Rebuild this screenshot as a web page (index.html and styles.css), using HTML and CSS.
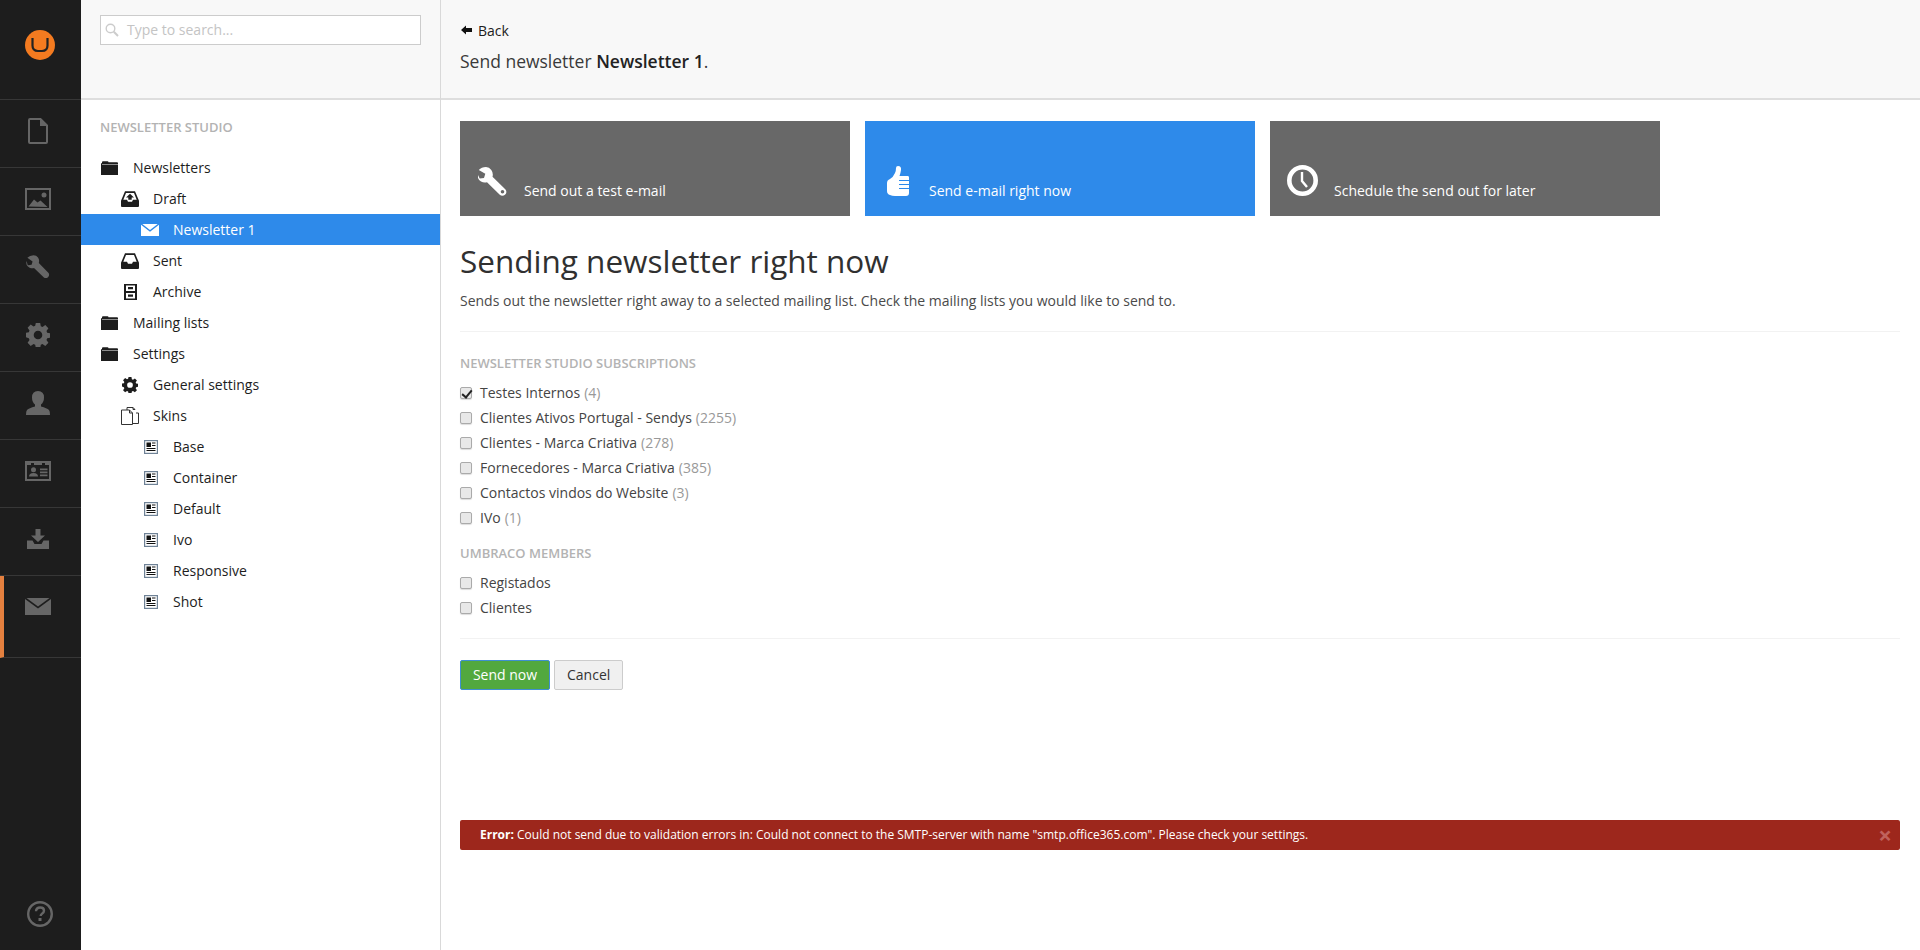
FILE: index.html
```html
<!DOCTYPE html>
<html lang="en">
<head>
<meta charset="utf-8">
<title>Send newsletter</title>
<link rel="stylesheet" href="styles.css">
</head>
<body>
<svg class="defs" width="0" height="0" aria-hidden="true">
  <symbol id="i-folder" viewBox="0 0 17 14"><path d="M0 14V2.200h1V1.300Q1 .3 2 .3h4.500q1 0 1 1h8.600q.9 0 .9 1V3H1v.6h16V14z"/></symbol>
  <symbol id="i-draft" viewBox="0 0 18 16"><path fill-rule="evenodd" d="M4 .3h10l4 9.500V15a1 1 0 0 1-1 1H1a1 1 0 0 1-1-1V9.800zM5 2 2.300 8.800H6l1 2h4l1-2h3.700L13 2zM9 2.800 13 6.600h-2.300v2.200H7.300V6.600H5z"/></symbol>
  <symbol id="i-inbox" viewBox="0 0 18 16"><path fill-rule="evenodd" d="M4 .3h10l4 9.500V15a1 1 0 0 1-1 1H1a1 1 0 0 1-1-1V9.800zM5 2 2.300 8.800H6l1 2h4l1-2h3.700L13 2z"/></symbol>
  <symbol id="i-archive" viewBox="0 0 13 16"><path fill-rule="evenodd" d="M0 0h13v16H0zM2 1.500V7h9V1.500zM2 9v5.500h9V9zM4 3h5v2.200H4zM4 10.500h5v2.200H4z"/></symbol>
  <symbol id="i-gear" viewBox="0 0 24 24"><path fill-rule="evenodd" d="M9.800 0h4.400l.6 3.300 1.700.7 2.800-1.900 3.100 3.100-1.900 2.800.7 1.700 3.300.6v4.400l-3.300.6-.7 1.700 1.900 2.800-3.100 3.100-2.800-1.900-1.700.7-.6 3.300H9.800l-.6-3.300-1.700-.7-2.800 1.900-3.100-3.100 1.900-2.800-.7-1.700L-.5 14.200V9.800l3.300-.6.7-1.700-1.900-2.800 3.100-3.100 2.800 1.900 1.700-.7zM12 7.700a4.300 4.300 0 1 0 0 8.600 4.300 4.300 0 0 0 0-8.600z"/></symbol>
  <symbol id="i-files" viewBox="0 0 18 18"><path fill="none" stroke="currentColor" stroke-width="1" d="M.5 3h8l3 3v11.500H.5zM8.500 3v3h3M6 3V.5h6l2 2M12 .5V2.500h2M15 6h2.500v10.500H12"/></symbol>
  <symbol id="i-news" viewBox="0 0 14 14"><path fill-rule="evenodd" fill="#6f8296" d="M0 0h14v14H0z"/><path fill="#fff" d="M1.200 1.200h11.600v11.600H1.200z"/><path fill="#111" d="M2.500 2.500H7v4.500H2.500zM8 2.500h3.500v1H8zM8 5h3.500v1H8zM2.500 8h9v1h-9zM2.500 10h9v1h-9z"/></symbol>
</svg>
<div class="app">
  <nav class="rail">
    <div class="rail-logo">
      <svg width="30" height="30" viewBox="0 0 30 30"><circle cx="15" cy="15" r="15" fill="#f47b20"/><path d="M7.500 8.500V16q0 5.500 5.500 5.500h4q5.500 0 5.500-5.500V8.500" fill="none" stroke="#222" stroke-width="2.200" transform="translate(0 -.5)"/></svg>
    </div>
    <a class="rail-item"><svg width="20" height="26" viewBox="0 0 20 26"><path d="M1 2q0-1 1-1h10.500L19 7.500V24q0 1-1 1H2q-1 0-1-1z" fill="none" stroke="#666" stroke-width="2"/><path d="M12 0 20 8h-8z" fill="#666"/></svg></a>
    <a class="rail-item"><svg width="26" height="22" viewBox="0 0 26 22"><path d="M1 1h24v20H1z" fill="none" stroke="#666" stroke-width="2"/><path d="M3.500 18.500 9 11.500l3.500 3 3-2 7 6.500z" fill="#666"/><circle cx="19" cy="7" r="2.500" fill="#666"/></svg></a>
    <a class="rail-item"><svg width="24" height="24" viewBox="0 0 24 24"><path d="M7 0Q3 0 .6 2.700L6 6.500 5 10l-4 .5L-.2 6Q-1.500 11 3 13q2.500 1 4.500.3l10.300 10q2.200 1.300 4.300-.4 2-2 .6-4.400L12.500 8q1-3-.8-5.700Q10 0 7 0z" fill="#666" transform="translate(.8 .2) scale(.96)"/></svg></a>
    <a class="rail-item"><svg width="24" height="24" viewBox="0 0 24 24"><use href="#i-gear" fill="#666"/></svg></a>
    <a class="rail-item"><svg width="24" height="24" viewBox="0 0 24 24"><path d="M12 0q6 0 6 6.500 0 4.500-3 7v2q6 1.500 8 3.500 1 1 1 5H0q0-4 1-5 2-2 8-3.500v-2q-3-2.500-3-7Q6 0 12 0z" fill="#666"/></svg></a>
    <a class="rail-item"><svg width="26" height="20" viewBox="0 0 26 20"><path fill-rule="evenodd" d="M0 0h26v20H0zM2 4v14h22V4z" fill="#666"/><path d="M6 2h3v2H6zM17 2h3v2h-3z" fill="#1d1d1d"/><circle cx="8.500" cy="8.700" r="2.500" fill="#666"/><path d="M4 15.500q0-3.500 4.500-3.500t4.500 3.500zM15 7.500h7.500v1.700H15zM15 10.500h7.500v1.700H15zM15 13.500h7.500v1.700H15z" fill="#666"/></svg></a>
    <a class="rail-item"><svg width="22" height="20" viewBox="0 0 22 20"><path d="M8.500 0h5v6.500H18L11 13 4 6.500h4.500z" fill="#666"/><path d="M0 11.500h5.500l2 3.500h7l2-3.500H22V20H0z" fill="#666"/></svg></a>
    <a class="rail-item rail-active"><svg width="26" height="17" viewBox="0 0 26 17"><path d="M0 1 13 10.500 26 1v16H0z" fill="#666"/><path d="M1.500 0h23L13 8.500z" fill="#666"/></svg></a>
    <div class="rail-help">
      <svg width="26" height="26" viewBox="0 0 26 26"><circle cx="13" cy="13" r="11.800" fill="none" stroke="#666" stroke-width="2.400"/><path d="M9 10.200q.2-3.700 4.200-3.700 3.800 0 3.800 3.200 0 1.800-2 3-1.300.8-1.300 2.300" fill="none" stroke="#666" stroke-width="2.400"/><path d="M11.500 17h3v3h-3z" fill="#666"/></svg>
    </div>
  </nav>

  <aside class="tree-panel">
    <div class="tree-head">
      <label class="search">
        <svg width="14" height="14" viewBox="0 0 14 14"><circle cx="5.500" cy="5.500" r="4.300" fill="none" stroke="#ccc" stroke-width="1.400"/><path d="m8.800 8.800 4.200 4.200" stroke="#ccc" stroke-width="2"/></svg>
        <span class="search-ph">Type to search...</span>
      </label>
    </div>
    <div class="tree-body">
      <div class="tree-title">NEWSLETTER STUDIO</div>
      <ul class="tree">
        <li class="row l0"><span class="ico"><svg class="s-folder"><use href="#i-folder"/></svg></span>Newsletters</li>
        <li class="row l1"><span class="ico"><svg class="s-inbox"><use href="#i-draft"/></svg></span>Draft</li>
        <li class="row l2 selected"><span class="ico"><svg class="s-mail" viewBox="0 0 18 12"><path d="M0 .8 9 7.800 18 .8V12H0z" fill="#fff"/><path d="M1.300 0h15.400L9 6z" fill="#fff"/></svg></span>Newsletter 1</li>
        <li class="row l1"><span class="ico"><svg class="s-inbox"><use href="#i-inbox"/></svg></span>Sent</li>
        <li class="row l1"><span class="ico"><svg class="s-archive"><use href="#i-archive"/></svg></span>Archive</li>
        <li class="row l0"><span class="ico"><svg class="s-folder"><use href="#i-folder"/></svg></span>Mailing lists</li>
        <li class="row l0"><span class="ico"><svg class="s-folder"><use href="#i-folder"/></svg></span>Settings</li>
        <li class="row l1"><span class="ico"><svg class="s-gear"><use href="#i-gear"/></svg></span>General settings</li>
        <li class="row l1"><span class="ico"><svg class="s-files"><use href="#i-files"/></svg></span>Skins</li>
        <li class="row l2"><span class="ico"><svg class="s-news"><use href="#i-news"/></svg></span>Base</li>
        <li class="row l2"><span class="ico"><svg class="s-news"><use href="#i-news"/></svg></span>Container</li>
        <li class="row l2"><span class="ico"><svg class="s-news"><use href="#i-news"/></svg></span>Default</li>
        <li class="row l2"><span class="ico"><svg class="s-news"><use href="#i-news"/></svg></span>Ivo</li>
        <li class="row l2"><span class="ico"><svg class="s-news"><use href="#i-news"/></svg></span>Responsive</li>
        <li class="row l2"><span class="ico"><svg class="s-news"><use href="#i-news"/></svg></span>Shot</li>
      </ul>
    </div>
  </aside>

  <main class="main">
    <header class="main-head">
      <a class="back"><svg width="11" height="10" viewBox="0 0 11 10"><path d="M0 5 5 .5V3h6v4H5v2.500z"/></svg>Back</a>
      <div class="page-title">Send newsletter <strong>Newsletter 1</strong>.</div>
    </header>
    <div class="content">
      <div class="cards">
        <a class="card">
          <svg class="card-ico wrench-ico" width="31" height="29" viewBox="0 0 31 29"><path d="M8 0Q3.500 0 .8 3l6.500 3.700L6 11l-4.300.6L-.2 7.500Q-1 12 3 14.500q3 1.800 6 .7L21.500 27.500q2.800 2.300 5.500.2 2.500-2.400.5-5.200L14.500 9.800Q15.500 6 13.300 3 11.300 0 8 0zM24.500 23a1.800 1.800 0 1 1 0 3.600 1.800 1.800 0 0 1 0-3.600z" fill="#fff" fill-rule="evenodd"/></svg>
          <span>Send out a test e-mail</span>
        </a>
        <a class="card card-blue">
          <svg class="card-ico thumb-ico" width="22" height="30" viewBox="0 0 22 30"><path d="M11 0q3.500 0 3 4-.5 3.500-1.500 6H21q1 0 1 1.500V14H12v1h10v3H12v1h10v3H12v1h10v4q0 3-3 3H8q-3 0-5-1-3-1-3-4V17q0-3 3-4 3-1.500 5-6 1-2 1-5 0-2 2-2z" fill="#fff"/></svg>
          <span>Send e-mail right now</span>
        </a>
        <a class="card">
          <svg class="card-ico clock-ico" width="31" height="31" viewBox="0 0 31 31"><circle cx="15.500" cy="15.500" r="13.200" fill="none" stroke="#fff" stroke-width="4.600"/><path d="M15 7v9l5 6" fill="none" stroke="#fff" stroke-width="2.400"/></svg>
          <span>Schedule the send out for later</span>
        </a>
      </div>
      <h2 class="heading">Sending newsletter right now</h2>
      <p class="lead">Sends out the newsletter right away to a selected mailing list. Check the mailing lists you would like to send to.</p>
      <hr class="rule">
      <h5 class="group">NEWSLETTER STUDIO SUBSCRIPTIONS</h5>
      <label class="check"><input type="checkbox" checked>Testes Internos <em>(4)</em></label>
      <label class="check"><input type="checkbox">Clientes Ativos Portugal - Sendys <em>(2255)</em></label>
      <label class="check"><input type="checkbox">Clientes - Marca Criativa <em>(278)</em></label>
      <label class="check"><input type="checkbox">Fornecedores - Marca Criativa <em>(385)</em></label>
      <label class="check"><input type="checkbox">Contactos vindos do Website <em>(3)</em></label>
      <label class="check"><input type="checkbox">IVo <em>(1)</em></label>
      <h5 class="group group-2">UMBRACO MEMBERS</h5>
      <label class="check"><input type="checkbox">Registados</label>
      <label class="check"><input type="checkbox">Clientes</label>
      <hr class="rule rule-2">
      <div class="actions">
        <button class="btn btn-send" type="button">Send now</button>
        <button class="btn" type="button">Cancel</button>
      </div>
      <div class="alert"><span><strong>Error:</strong> Could not send due to validation errors in: Could not connect to the SMTP-server with name "smtp.office365.com". Please check your settings.</span><b class="alert-x">×</b></div>
    </div>
  </main>
</div>
</body>
</html>
```
FILE: styles.css
```css
* { box-sizing: border-box; }
html, body { margin: 0; height: 100%; background: #fff; }
body { font: 14px/20px "Open Sans", "Noto Sans", sans-serif; color: #343434; overflow: hidden; }
.defs { position: absolute; }
a { color: inherit; text-decoration: none; }

.app { display: flex; height: 950px; }

.rail { width: 81px; flex: none; background: #1d1d1d; display: flex; flex-direction: column; }
.rail-logo { height: 100px; border-bottom: 1px solid #373737; padding: 30px 0 0 25px; }
.rail-logo svg { display: block; }
.rail-item { height: 68px; flex: none; border-bottom: 1px solid #373737; display: flex; align-items: center; justify-content: center; padding: 0 5px 5px 0; }
.rail-active { height: 82px; padding: 0 9px 21px 0; border-left: 4px solid #e4803f; }
.rail-help { margin-top: auto; padding: 0 0 23px 27px; }
.rail-help svg { display: block; }

.tree-panel { width: 360px; flex: none; border-right: 1px solid #d9d9d9; display: flex; flex-direction: column; }
.tree-head { height: 100px; background: #f8f8f8; border-bottom: 2px solid #dedede; padding: 15px 19px 0; }
.search { display: flex; align-items: center; gap: 8px; height: 30px; border: 1px solid #ccc; background: #fff; padding-left: 4px; width: 321px; }
.search-ph { color: #c4c4c4; font-size: 14px; }
.tree-body { padding-top: 17px; }
.tree-title { padding-left: 19px; font-size: 13px; font-weight: 600; color: #b3b3b3; line-height: 20px; margin-bottom: 15px; }
.tree { list-style: none; margin: 0; padding: 0; }
.row { display: flex; align-items: center; height: 31px; color: #1d1d1d; }
.l0 { padding-left: 20px; }
.l1 { padding-left: 40px; }
.l2 { padding-left: 60px; }
.ico { width: 32px; display: flex; align-items: center; justify-content: flex-start; flex: none; }
.selected { background: #2e8aea; color: #fff; }
.s-folder { width: 17px; height: 14px; fill: #1d1d1d; margin-top: 1px; }
.s-inbox { width: 18px; height: 16px; fill: #1d1d1d; }
.s-mail { width: 18px; height: 12px; }
.s-archive { width: 13px; height: 16px; fill: #1d1d1d; margin-left: 3px; }
.s-gear { width: 16px; height: 16px; fill: #1d1d1d; margin-left: 1px; }
.s-files { width: 18px; height: 18px; color: #333; }
.s-news { width: 14px; height: 14px; margin-left: 3px; }

.main { flex: 1; min-width: 0; display: flex; flex-direction: column; }
.main-head { height: 100px; background: #f8f8f8; border-bottom: 2px solid #dedede; padding: 21px 19px 0; }
.back { display: flex; align-items: center; gap: 6px; color: #1d1d1d; height: 20px; padding-left: 1px; }
.back svg { margin-top: -2px; fill: #111; }
.page-title { font-size: 17.500px; line-height: 24px; margin-top: 8px; color: #3a3a3a; }
.page-title strong { font-weight: 600; color: #222; }

.content { padding: 21px 20px 0 19px; }
.cards { display: flex; gap: 15px; }
.card { width: 390px; height: 95px; background: #686868; color: #fff; display: flex; align-items: flex-start; position: relative; padding: 60px 0 0 64px; line-height: 20px; }
.card-blue { background: #2e8aea; }
.card-ico { position: absolute; }
.wrench-ico { left: 18px; top: 46px; }
.thumb-ico { left: 22px; top: 45px; }
.clock-ico { left: 17px; top: 44px; }

.heading { font-size: 31.500px; font-weight: 400; line-height: 36px; margin: 27px 0 0; color: #303030; }
.lead { margin: 12px 0 0; color: #4a4a4a; }
.rule { border: 0; border-top: 1px solid #f2f2f2; margin: 20px 0 0; }
.group { font-size: 13px; font-weight: 600; color: #b3b3b3; line-height: 20px; margin: 21px 0 7px; }
.group-2 { margin: 13px 0 7px; }
.check { display: flex; align-items: center; height: 25px; color: #444; }
.check em { font-style: normal; color: #999; margin-left: 4px; }
.check input { appearance: none; -webkit-appearance: none; width: 12px; height: 12px; margin: 1px 8px 0 0; background: #e8e8e8; border: 1px solid #aaa; border-radius: 2px; box-shadow: 0 1px 1px #ddd; position: relative; flex: none; }
.check input:checked::after { content: ""; position: absolute; left: 3px; top: 0; width: 4px; height: 8px; border: solid #222; border-width: 0 2px 2px 0; transform: rotate(40deg); }
.rule-2 { margin-top: 18px; }

.actions { display: flex; gap: 4px; margin-top: 21px; }
.btn { height: 30px; font: 14px/20px "Open Sans", "Noto Sans", sans-serif; padding: 0 12px; background: #f0f0f0; color: #333; border: 1px solid #ccc; border-radius: 2px; }
.btn-send { width: 90px; padding: 0; background: #52a83e; color: #fff; border-color: #3f8fd0; }

.alert { margin-top: 130px; height: 30px; background: #9d271c; border-radius: 2px; color: #fff; font-size: 12px; display: flex; align-items: center; justify-content: space-between; padding: 0 8px 0 20px; }
.alert strong { font-weight: 700; }
.alert-x { font-size: 24px; color: #c0625c; font-weight: 700; line-height: 20px; }
```
